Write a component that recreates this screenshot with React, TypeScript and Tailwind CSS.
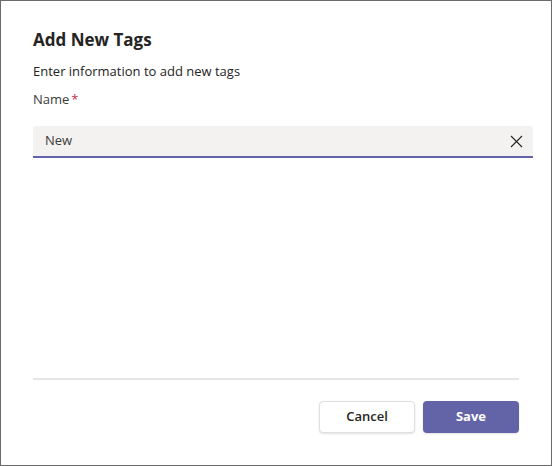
export default function App() {
  return (
    <div
      className="w-[552px] h-[466px] border border-[#6b6b6b] bg-white flex flex-col text-[#252423]"
      style={{ fontFamily: '"Open Sans", "Noto Sans", sans-serif' }}
    >
      <div className="pl-8 pr-[18px] pt-[27px]">
        <h1 className="text-[17px] leading-6 font-bold">Add New Tags</h1>
        <p className="mt-[9px] text-[13px] leading-5">Enter information to add new tags</p>
        <label className="mt-2 block text-[13px] leading-5 text-[#3b3a39]">
          Name<span className="text-[#c4314b] ml-0.5">*</span>
        </label>
        <div className="mt-[17px] h-8 flex items-center bg-[#f3f2f1] border-b-2 border-[#6264a7] rounded-t-[3px] pl-3 pr-[10px]">
          <span className="flex-1 text-[13px] text-[#3b3a39]">New</span>
          <svg width="13" height="13" viewBox="0 0 13 13">
            <path d="M1 1 L12 12 M12 1 L1 12" stroke="#252423" strokeWidth="1.1" fill="none" />
          </svg>
        </div>
      </div>
      <div className="flex-1" />
      <div className="px-8 pb-8">
        <div className="h-[2px] bg-[#e6e6e6]" />
        <div className="mt-[21px] flex justify-end gap-2">
          <button className="w-24 h-8 rounded border border-[#e1dfdd] bg-white shadow-[0_1px_2px_rgba(0,0,0,0.12)] text-[13px] font-semibold">
            Cancel
          </button>
          <button className="w-24 h-8 rounded bg-[#6264a7] text-white text-[13px] font-bold shadow-[0_1px_2px_rgba(0,0,0,0.12)]">
            Save
          </button>
        </div>
      </div>
    </div>
  );
}
